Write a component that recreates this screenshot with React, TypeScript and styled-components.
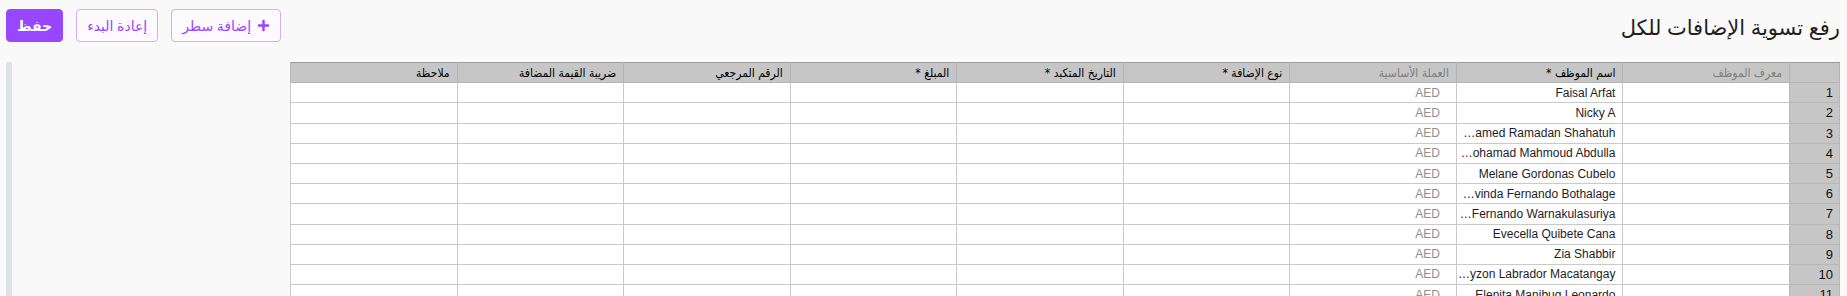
import React from 'react';
import styled, { createGlobalStyle } from 'styled-components';
import { FaPlus } from 'react-icons/fa';

const GlobalStyle = createGlobalStyle`
  html, body {
    margin: 0;
    background: #f9f9f9;
  }
  body {
    overflow: hidden;
  }
`;

const Page = styled.div`
  direction: rtl;
  padding: 9px 7px 0 6px;
  font-family: "Noto Sans", "DejaVu Sans", sans-serif;
`;

const Toolbar = styled.div`
  display: flex;
  align-items: center;
  justify-content: space-between;
  height: 33px;
`;

const Title = styled.h1`
  margin: 0;
  padding-top: 3px;
  font-size: 21px;
  font-weight: 400;
  color: #1f1f1f;
`;

const Actions = styled.div`
  display: flex;
  gap: 13px;
`;

const Button = styled.button<{ $primary?: boolean }>`
  height: 33px;
  padding: 0 10px;
  display: inline-flex;
  align-items: center;
  gap: 6px;
  border-radius: 4px;
  font-family: inherit;
  font-size: 14px;
  font-weight: ${p => (p.$primary ? 700 : 400)};
  border: 1px solid ${p => (p.$primary ? '#9747ff' : '#cfaefc')};
  background: ${p => (p.$primary ? '#9747ff' : '#fcfaff')};
  color: ${p => (p.$primary ? '#ffffff' : '#9747ff')};
  cursor: pointer;

  svg {
    font-size: 13px;
  }
`;

const Content = styled.div`
  display: flex;
  justify-content: space-between;
  margin-top: 20px;
`;

const ScrollTrack = styled.div`
  width: 6px;
  height: 260px;
  background: #dfe1e8;
  border-radius: 2px 2px 0 0;
`;

const Grid = styled.table`
  width: 1550px;
  border-collapse: collapse;
  table-layout: fixed;
  font-family: "Liberation Sans", "DejaVu Sans", sans-serif;
  font-size: 12px;
  background: #ffffff;
  border-left: 1px solid #bdbdbd;

  tr {
    height: 20.2px;
  }
`;

const HeadCell = styled.th<{ $muted?: boolean }>`
  height: 19px;
  padding: 0 7px;
  background: #c6c6c6;
  border: 1px solid #b4b4b4;
  border-top-color: #9c9c9c;
  text-align: right;
  font-family: "DejaVu Sans Condensed", "DejaVu Sans", sans-serif;
  font-size: 12px;
  font-weight: 400;
  color: ${p => (p.$muted ? '#7f7f7f' : '#000000')};
  white-space: nowrap;
  overflow: hidden;
`;

const RowHead = styled.td`
  padding: 0 6px;
  background: #c6c6c6;
  border: 1px solid #b8b8b8;
  text-align: right;
  font-size: 13px;
  color: #111111;
`;

const Cell = styled.td<{ $muted?: boolean; $pad?: number }>`
  padding: 0 ${p => p.$pad ?? 7}px 0 1px;
  border: 1px solid #c9c9c9;
  text-align: right;
  color: ${p => (p.$muted ? '#8f8f8f' : '#1d1d28')};
  white-space: nowrap;
  overflow: hidden;
  text-overflow: ellipsis;
`;

const columns = [
  { title: 'معرف الموظف', muted: true },
  { title: 'اسم الموظف *' },
  { title: 'العملة الأساسية', muted: true },
  { title: 'نوع الإضافة *' },
  { title: 'التاريخ المتكبد *' },
  { title: 'المبلغ *' },
  { title: 'الرقم المرجعي' },
  { title: 'ضريبة القيمة المضافة' },
  { title: 'ملاحظة' },
];

const employees = [
  'Faisal Arfat',
  'Nicky A',
  'Mohamed Ramadan Shahatuh',
  'Ali Mohamad Mahmoud Abdulla',
  'Melane Gordonas Cubelo',
  'Kasun Devinda Fernando Bothalage',
  'Anton Fernando Warnakulasuriya',
  'Evecella Quibete Cana',
  'Zia Shabbir',
  'Jayzon Labrador Macatangay',
  'Elenita Manibug Leonardo',
  'Rowena Dela Cruz',
];

const App: React.FC = () => {
  return (
    <Page>
      <GlobalStyle />
      <Toolbar>
        <Title>رفع تسوية الإضافات للكل</Title>
        <Actions>
          <Button>
            <FaPlus />
            إضافة سطر
          </Button>
          <Button>إعادة البدء</Button>
          <Button $primary>حفظ</Button>
        </Actions>
      </Toolbar>

      <Content>
        <Grid>
          <colgroup>
            <col style={{ width: 50 }} />
            {columns.map(c => (
              <col key={c.title} />
            ))}
          </colgroup>
          <thead>
            <tr>
              <HeadCell />
              {columns.map(c => (
                <HeadCell key={c.title} $muted={c.muted}>
                  {c.title}
                </HeadCell>
              ))}
            </tr>
          </thead>
          <tbody>
            {employees.map((name, i) => (
              <tr key={name}>
                <RowHead>{i + 1}</RowHead>
                <Cell />
                <Cell>{name}</Cell>
                <Cell $muted $pad={16}>AED</Cell>
                <Cell />
                <Cell />
                <Cell />
                <Cell />
                <Cell />
                <Cell />
              </tr>
            ))}
          </tbody>
        </Grid>
        <ScrollTrack />
      </Content>
    </Page>
  );
};

export default App;
